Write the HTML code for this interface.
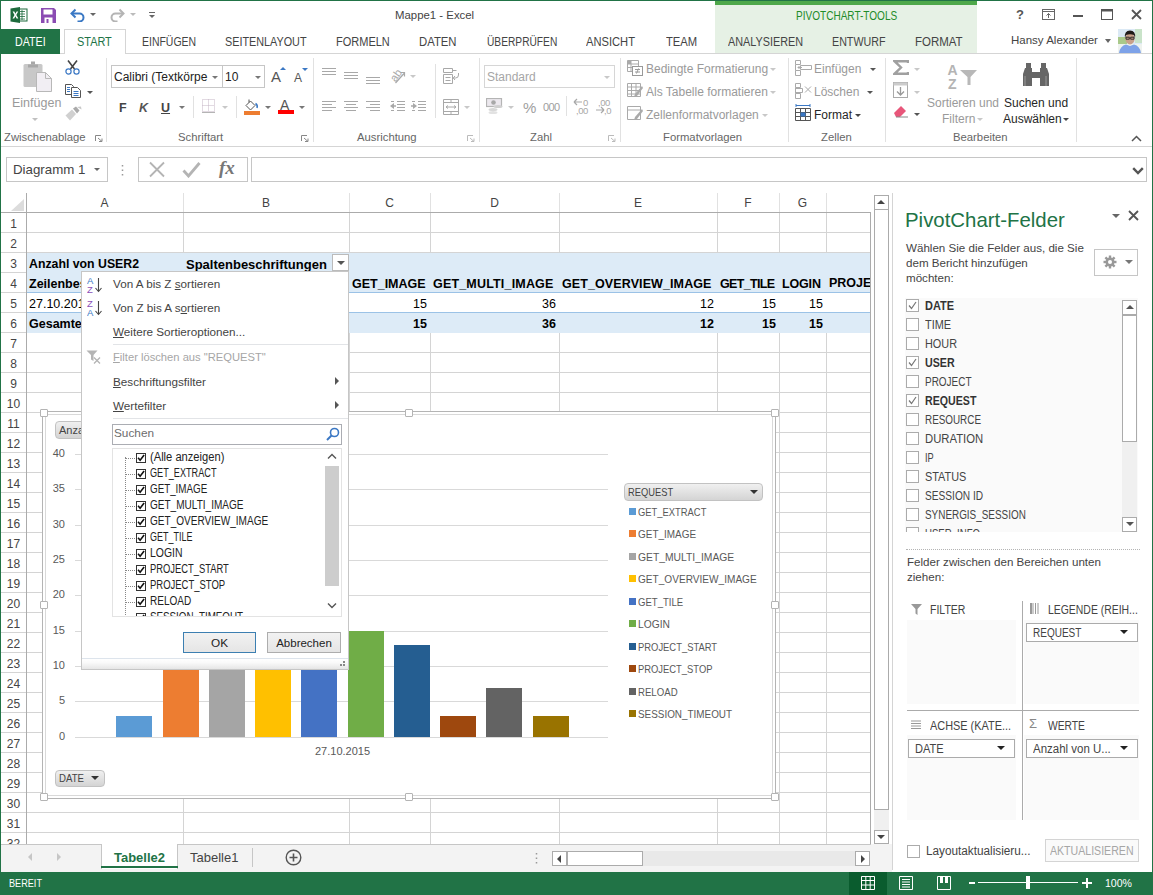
<!DOCTYPE html>
<html><head><meta charset="utf-8">
<style>
*{box-sizing:border-box;margin:0;padding:0}
html,body{width:1153px;height:895px;overflow:hidden;background:#fff}
body{position:relative;font-family:"Liberation Sans",sans-serif;font-size:12px;color:#444}
.a{position:absolute}
.t{position:absolute;white-space:nowrap;line-height:1}
.g{color:#444}
.gl{color:#a6a6a6}
.dk{color:#262626}
.tri{position:absolute;width:0;height:0;border-left:3px solid transparent;border-right:3px solid transparent;border-top:3px solid #777}
.vl{position:absolute;width:1px;background:#d4d4d4}
.hl{position:absolute;height:1px;background:#d4d4d4}
</style></head><body>
<!-- window frame -->
<div class="a" style="left:0;top:0;width:1153px;height:1px;background:#217346"></div>
<div class="a" style="left:0;top:0;width:1px;height:895px;background:#217346"></div>
<div class="a" style="left:1152px;top:0;width:1px;height:895px;background:#217346"></div>

<!-- TITLEBAR -->
<div id="title">
<!-- excel icon -->
<svg class="a" style="left:10px;top:7px" width="18" height="16" viewBox="0 0 18 16">
<rect x="7" y="2" width="10" height="12" fill="#fff" stroke="#1d6b3c" stroke-width="1"/>
<path d="M9 4.5h6M9 7h6M9 9.5h6M9 12h6M12 3v10" stroke="#1d6b3c" stroke-width="0.8"/>
<path d="M0.5 1.5L10 0v16L0.5 14.5z" fill="#1d6b3c"/>
<path d="M2.6 4.5L4.3 4.5L5.4 6.7L6.6 4.5L8.2 4.5L6.3 8L8.3 11.5L6.6 11.5L5.4 9.2L4.2 11.5L2.5 11.5L4.5 8z" fill="#fff"/>
</svg>
<!-- save icon -->
<svg class="a" style="left:41px;top:8px" width="15" height="15" viewBox="0 0 15 15">
<path d="M0 0h13l2 2v13H0z" fill="#8b4cb3"/>
<rect x="2.5" y="1.5" width="9" height="5" fill="#fff"/>
<rect x="3.5" y="9.5" width="8" height="5.5" fill="#fff"/>
<rect x="5.5" y="11" width="2" height="4" fill="#8b4cb3"/>
</svg>
<!-- undo -->
<svg class="a" style="left:69px;top:8px" width="17" height="14" viewBox="0 0 17 14">
<path d="M3 5.5h7.5a4 4 0 0 1 0 8h-2" fill="none" stroke="#3a78c4" stroke-width="2"/>
<path d="M6.5 1.5L2.5 5.5L6.5 9.5" fill="none" stroke="#3a78c4" stroke-width="2"/>
</svg>
<div class="tri" style="left:90px;top:13px;border-top-color:#666"></div>
<!-- redo -->
<svg class="a" style="left:109px;top:8px" width="17" height="14" viewBox="0 0 17 14">
<path d="M14 5.5H6.5a4 4 0 0 0 0 8h2" fill="none" stroke="#b4b4b4" stroke-width="2"/>
<path d="M10.5 1.5L14.5 5.5L10.5 9.5" fill="none" stroke="#b4b4b4" stroke-width="2"/>
</svg>
<div class="tri" style="left:130px;top:13px;border-top-color:#bbb"></div>
<div class="a" style="left:149px;top:12px;width:6px;height:1px;background:#666"></div>
<div class="tri" style="left:149px;top:15px;border-top-color:#666"></div>
<div class="t dk" style="left:395px;top:10px;font-size:11.4px;color:#444">Mappe1 - Excel</div>
<!-- pivotchart tools -->
<div class="a" style="left:715px;top:1px;width:262px;height:52px;background:#e6f1e5"></div>
<div class="a" style="left:715px;top:1px;width:262px;height:4px;background:#4ea84a"></div>
<div class="t" style="left:796px;top:10px;font-size:12px;color:#1f8c2a;transform:scaleX(0.837);transform-origin:0 0">PIVOTCHART-TOOLS</div>
<!-- window buttons -->
<div class="t" style="left:1016px;top:8px;font-size:13px;font-weight:bold;color:#555">?</div>
<svg class="a" style="left:1042px;top:9px" width="13" height="11" viewBox="0 0 13 11"><rect x="0.5" y="0.5" width="12" height="10" fill="none" stroke="#666"/><path d="M0.5 2.5h12" stroke="#666"/><path d="M6.5 9V4.5M4.5 6.5l2-2 2 2" fill="none" stroke="#666"/></svg>
<div class="a" style="left:1073px;top:15px;width:10px;height:2px;background:#555"></div>
<svg class="a" style="left:1101px;top:9px" width="12" height="11" viewBox="0 0 12 11"><rect x="0.5" y="0.5" width="11" height="10" fill="none" stroke="#555"/><path d="M0.5 1.5h11" stroke="#555" stroke-width="2"/></svg>
<svg class="a" style="left:1131px;top:9px" width="11" height="11" viewBox="0 0 11 11"><path d="M1 1L10 10M10 1L1 10" stroke="#555" stroke-width="1.8"/></svg>
<div class="t" style="left:1011px;top:35px;font-size:11.5px;color:#444">Hansy Alexander</div>
<div class="tri" style="left:1105px;top:39px;border-left-width:3px;border-right-width:3px;border-top:4px solid #666"></div>
<!-- avatar -->
<svg class="a" style="left:1118px;top:29px" width="24" height="24" viewBox="0 0 24 24">
<rect width="24" height="24" fill="#dbe9f5"/>
<rect x="0" y="8" width="9" height="8" fill="#a9c98a"/>
<rect x="17" y="0" width="7" height="14" fill="#c9e3c9"/>
<rect x="0" y="15" width="24" height="9" fill="#eef2ee"/>
<path d="M1 24Q2 17 8 15.5L12 17L16 15.5Q22 17 23 24z" fill="#7ea2e8"/>
<ellipse cx="12" cy="9.5" rx="4.6" ry="6" fill="#c9a08a"/>
<path d="M7 9Q6 1.5 12 1.5Q18 1.5 17 9L16 6Q12 4.5 8 6z" fill="#1f1a18"/>
<path d="M8 8.2h3.3v2H8zM12.7 8.2H16v2h-3.3z" fill="none" stroke="#222" stroke-width="0.9"/>
</svg>
</div>

<!-- TABS -->
<div id="tabs">
<div class="a" style="left:1px;top:53px;width:1151px;height:1px;background:#d5d5d5"></div>
<div class="a" style="left:1px;top:29px;width:59px;height:25px;background:#217346"></div>
<div class="t" style="left:14.7px;top:36px;font-size:12px;color:#fff;transform:scaleX(0.891);transform-origin:0 0">DATEI</div>
<div class="a" style="left:64px;top:29px;width:62px;height:25px;background:#fff;border:1px solid #d5d5d5;border-bottom:none"></div>
<div class="t" style="left:76.9px;top:36px;font-size:12px;color:#217346;transform:scaleX(0.910);transform-origin:0 0">START</div>
<div class="t" style="left:141.5px;top:36px;font-size:12px;color:#444;transform:scaleX(0.873);transform-origin:0 0">EINFÜGEN</div>
<div class="t" style="left:225.1px;top:36px;font-size:12px;color:#444;transform:scaleX(0.901);transform-origin:0 0">SEITENLAYOUT</div>
<div class="t" style="left:336.1px;top:36px;font-size:12px;color:#444;transform:scaleX(0.917);transform-origin:0 0">FORMELN</div>
<div class="t" style="left:419.0px;top:36px;font-size:12px;color:#444;transform:scaleX(0.943);transform-origin:0 0">DATEN</div>
<div class="t" style="left:486.5px;top:36px;font-size:12px;color:#444;transform:scaleX(0.850);transform-origin:0 0">ÜBERPRÜFEN</div>
<div class="t" style="left:586.2px;top:36px;font-size:12px;color:#444;transform:scaleX(0.930);transform-origin:0 0">ANSICHT</div>
<div class="t" style="left:665.6px;top:36px;font-size:12px;color:#444;transform:scaleX(0.936);transform-origin:0 0">TEAM</div>
<div class="t" style="left:728.0px;top:36px;font-size:12px;color:#444;transform:scaleX(0.902);transform-origin:0 0">ANALYSIEREN</div>
<div class="t" style="left:832.0px;top:36px;font-size:12px;color:#444;transform:scaleX(0.892);transform-origin:0 0">ENTWURF</div>
<div class="t" style="left:915.0px;top:36px;font-size:12px;color:#444;transform:scaleX(0.956);transform-origin:0 0">FORMAT</div>
</div>

<!-- RIBBON -->
<div id="ribbon">
<div class="a" style="left:1px;top:146px;width:1151px;height:1px;background:#d5d5d5"></div>
<!-- group separators -->
<div class="a" style="left:106px;top:58px;width:1px;height:84px;background:#e1e1e1"></div>
<div class="a" style="left:313px;top:58px;width:1px;height:84px;background:#e1e1e1"></div>
<div class="a" style="left:479px;top:58px;width:1px;height:84px;background:#e1e1e1"></div>
<div class="a" style="left:620px;top:58px;width:1px;height:84px;background:#e1e1e1"></div>
<div class="a" style="left:788px;top:58px;width:1px;height:84px;background:#e1e1e1"></div>
<div class="a" style="left:885px;top:58px;width:1px;height:84px;background:#e1e1e1"></div>
<div class="a" style="left:1076px;top:58px;width:1px;height:84px;background:#e1e1e1"></div>
<!-- group labels -->
<div class="t" style="left:4px;top:132px;font-size:11.3px;color:#666">Zwischenablage</div>
<div class="t" style="left:178px;top:132px;font-size:11.3px;color:#666">Schriftart</div>
<div class="t" style="left:357px;top:132px;font-size:11.3px;color:#666">Ausrichtung</div>
<div class="t" style="left:530px;top:132px;font-size:11.3px;color:#666">Zahl</div>
<div class="t" style="left:663px;top:132px;font-size:11.3px;color:#666">Formatvorlagen</div>
<div class="t" style="left:821px;top:132px;font-size:11.3px;color:#666">Zellen</div>
<div class="t" style="left:953px;top:132px;font-size:11.3px;color:#666">Bearbeiten</div>
<!-- launchers -->
<svg class="a" style="left:95px;top:135px" width="8" height="7" viewBox="0 0 8 7"><path d="M0.5 6V0.5H6M3 3l4 3.5M4 6.5h3v-3" fill="none" stroke="#888"/></svg>
<svg class="a" style="left:301px;top:135px" width="8" height="7" viewBox="0 0 8 7"><path d="M0.5 6V0.5H6M3 3l4 3.5M4 6.5h3v-3" fill="none" stroke="#888"/></svg>
<svg class="a" style="left:467px;top:135px" width="8" height="7" viewBox="0 0 8 7"><path d="M0.5 6V0.5H6M3 3l4 3.5M4 6.5h3v-3" fill="none" stroke="#bbb"/></svg>
<svg class="a" style="left:608px;top:135px" width="8" height="7" viewBox="0 0 8 7"><path d="M0.5 6V0.5H6M3 3l4 3.5M4 6.5h3v-3" fill="none" stroke="#bbb"/></svg>
<svg class="a" style="left:1131px;top:135px" width="11" height="7" viewBox="0 0 11 7"><path d="M1 6L5.5 1.5L10 6" fill="none" stroke="#555" stroke-width="1.5"/></svg>

<!-- Zwischenablage -->
<svg class="a" style="left:23px;top:61px" width="30" height="31" viewBox="0 0 30 31">
<rect x="0.5" y="3" width="19" height="23" rx="1.5" fill="#c8c8c8"/>
<rect x="5" y="3.5" width="10" height="3" fill="#a8a8a8"/>
<rect x="8" y="0.5" width="4" height="3" fill="#a8a8a8"/>
<path d="M13.5 11.5h9l6 6v13h-15z" fill="#f1eef3" stroke="#b8b8b8"/>
<path d="M22.5 11.5v6h6" fill="none" stroke="#b8b8b8"/>
</svg>
<div class="t" style="left:12px;top:97px;font-size:12.5px;color:#9a9a9a">Einfügen</div>
<div class="tri" style="left:32px;top:118px;border-top-color:#c0c0c0"></div>
<svg class="a" style="left:65px;top:60px" width="15" height="15" viewBox="0 0 15 15">
<path d="M3 0.5L9.5 9M12 0.5L5.5 9" stroke="#444" stroke-width="1.6"/>
<circle cx="3.5" cy="11.5" r="2.6" fill="none" stroke="#3b78c4" stroke-width="1.2"/>
<circle cx="11.5" cy="11.5" r="2.6" fill="none" stroke="#3b78c4" stroke-width="1.2"/>
</svg>
<svg class="a" style="left:65px;top:84px" width="16" height="14" viewBox="0 0 16 14">
<path d="M0.5 0.5h6l2 2v8h-8z" fill="#fff" stroke="#555"/>
<path d="M6.5 3.5h6l3 3v7h-9z" fill="#fff" stroke="#555"/>
<path d="M2 3.5h3M2 5.5h3M2 7.5h3M8.5 7.5h5M8.5 9.5h5M8.5 11.5h5" stroke="#3b78c4"/>
</svg>
<div class="tri" style="left:87px;top:91px;border-top-color:#555"></div>
<svg class="a" style="left:65px;top:106px" width="17" height="15" viewBox="0 0 17 15">
<path d="M0.5 9.5L7 3.5L11 8L5 14.5z" fill="#d0d0d0"/>
<path d="M8 2.5L11 0.5L14.5 4.5L12 7.5z" fill="#aaa"/>
<path d="M12 1L16 0.5L16.5 3.5z" fill="#c8c8c8"/>
</svg>

<!-- Schriftart -->
<div class="a" style="left:111px;top:65px;width:112px;height:23px;border:1px solid #c6c6c6;background:#fff"></div>
<div class="a" style="left:222px;top:65px;width:43px;height:23px;border:1px solid #c6c6c6;background:#fff"></div>
<div class="t" style="left:114px;top:71px;font-size:12px;color:#222">Calibri (Textkörpe</div>
<div class="tri" style="left:212px;top:76px;border-top-color:#777"></div>
<div class="t" style="left:225px;top:71px;font-size:12px;color:#222">10</div>
<div class="tri" style="left:255px;top:76px;border-top-color:#777"></div>
<div class="t" style="left:271px;top:69px;font-size:15px;color:#555">A</div>
<div class="a" style="left:280px;top:67px;width:0;height:0;border-left:3px solid transparent;border-right:3px solid transparent;border-bottom:3px solid #3b78c4"></div>
<div class="t" style="left:294px;top:72px;font-size:12px;color:#555">A</div>
<div class="a" style="left:302px;top:68px;width:0;height:0;border-left:3px solid transparent;border-right:3px solid transparent;border-top:3px solid #3b78c4"></div>
<div class="t" style="left:119px;top:102px;font-size:12.5px;font-weight:bold;color:#444">F</div>
<div class="t" style="left:139px;top:102px;font-size:12.5px;font-weight:bold;font-style:italic;color:#555">K</div>
<div class="t" style="left:161px;top:102px;font-size:12.5px;font-weight:bold;color:#444;text-decoration:underline">U</div>
<div class="tri" style="left:179px;top:106px;border-top-color:#777"></div>
<div class="a" style="left:193px;top:96px;width:1px;height:22px;background:#e1e1e1"></div>
<svg class="a" style="left:202px;top:99px" width="13" height="14" viewBox="0 0 13 14"><path d="M0.5 0.5h12v12h-12zM6.5 0.5v12M0.5 6.5h12" fill="none" stroke="#c4b4c4" stroke-dasharray="1 1"/><path d="M0 13.5h13" stroke="#b4b4b4"/></svg>
<div class="tri" style="left:222px;top:106px;border-top-color:#c8c8c8"></div>
<div class="a" style="left:236px;top:96px;width:1px;height:22px;background:#e1e1e1"></div>
<svg class="a" style="left:244px;top:99px" width="16" height="16" viewBox="0 0 16 16">
<path d="M2 6.5L6.5 2L11 6.5L6.5 11z" fill="#fff" stroke="#555"/>
<path d="M5 0.5v3" stroke="#555"/>
<path d="M11.5 4.5Q14 6 13 9" fill="none" stroke="#3b78c4" stroke-width="1.5"/>
<rect x="0" y="12" width="16" height="4" fill="#ed7d31"/>
</svg>
<div class="tri" style="left:265px;top:106px;border-top-color:#777"></div>
<div class="t" style="left:280px;top:98px;font-size:14px;color:#555">A</div>
<div class="a" style="left:278px;top:110px;width:16px;height:4px;background:#ff0000"></div>
<div class="tri" style="left:299px;top:106px;border-top-color:#777"></div>

<!-- Ausrichtung -->
<svg class="a" style="left:322px;top:67px" width="60" height="17" viewBox="0 0 60 17">
<path d="M0 1.5h14M0 4.5h14M0 7.5h14" stroke="#a8a8a8"/>
<path d="M22 5.5h14M22 8.5h14M22 11.5h14" stroke="#a8a8a8"/>
<path d="M44 10.5h14M44 13.5h14M44 16.5h14" stroke="#a8a8a8"/>
</svg>
<svg class="a" style="left:389px;top:67px" width="18" height="17" viewBox="0 0 18 17">
<text x="1" y="13" font-size="11" font-family="Liberation Sans" fill="#a8a8a8" transform="rotate(-55 6 9)">ab</text>
<path d="M6.5 16L15 6.5M11.5 5.5h4v4" fill="none" stroke="#a8a8a8" stroke-width="1.2"/>
</svg>
<div class="tri" style="left:410px;top:75px;border-top-color:#c8c8c8"></div>
<svg class="a" style="left:322px;top:101px" width="107" height="12" viewBox="0 0 107 12">
<path d="M0 0.5h14M0 3.5h10M0 6.5h14M0 9.5h10" stroke="#a8a8a8"/>
<path d="M22 0.5h14M24 3.5h10M22 6.5h14M24 9.5h10" stroke="#a8a8a8"/>
<path d="M44 0.5h14M48 3.5h10M44 6.5h14M48 9.5h10" stroke="#a8a8a8"/>
<path d="M69 0.5h3M75 0.5h8M75 3.5h8M75 6.5h8M69 9.5h3M75 9.5h8" stroke="#a8a8a8"/>
<path d="M68 5L72 2V8z" fill="#a8a8a8"/><path d="M70 5h4" stroke="#a8a8a8" stroke-width="1.5"/>
<path d="M90 0.5h3M96 0.5h8M96 3.5h8M96 6.5h8M90 9.5h3M96 9.5h8" stroke="#a8a8a8"/>
<path d="M95 5L91 2V8z" fill="#a8a8a8"/><path d="M89 5h4" stroke="#a8a8a8" stroke-width="1.5"/>
</svg>
<div class="a" style="left:435px;top:64px;width:1px;height:54px;background:#e1e1e1"></div>
<svg class="a" style="left:443px;top:68px" width="17" height="16" viewBox="0 0 17 16">
<path d="M0.5 0.5h9v4h-9zM9.5 2.5h4M0.5 6.5h9v9h-9zM2.5 9.5h5M2.5 12.5h5" fill="none" stroke="#a8a8a8"/>
<path d="M15.5 5v2a3 3 0 0 1-3 3h-2M12 8l-1.8 2 1.8 2" fill="none" stroke="#a8a8a8"/>
</svg>
<svg class="a" style="left:443px;top:99px" width="16" height="16" viewBox="0 0 16 16">
<path d="M0.5 0.5h15v15h-15zM0.5 3.5h15M0.5 12.5h15M8 0.5v3M8 12.5v3" fill="none" stroke="#a8a8a8"/>
<path d="M3 8h10M3 8l2-1.5M3 8l2 1.5M13 8l-2-1.5M13 8l-2 1.5" fill="none" stroke="#a8a8a8"/>
</svg>
<div class="tri" style="left:464px;top:106px;border-top-color:#c8c8c8"></div>

<!-- Zahl -->
<div class="a" style="left:484px;top:65px;width:131px;height:23px;border:1px solid #d6d6d6;background:#fff"></div>
<div class="t" style="left:487px;top:71px;font-size:12px;color:#a6a6a6">Standard</div>
<div class="tri" style="left:604px;top:76px;border-top-color:#c8c8c8"></div>
<svg class="a" style="left:486px;top:98px" width="18" height="17" viewBox="0 0 18 17">
<rect x="0.5" y="0.5" width="15" height="8" fill="#ece8ee" stroke="#b4b4b4" stroke-width="1.2"/>
<circle cx="7.5" cy="4.5" r="2.3" fill="#a8a8a8"/>
<ellipse cx="12" cy="8.5" rx="4.5" ry="1.6" fill="#d0d0d0"/>
<ellipse cx="7" cy="11.5" rx="4.5" ry="1.6" fill="#d8d8d8"/>
<ellipse cx="7" cy="14.5" rx="4.5" ry="1.6" fill="#e2e2e2"/>
</svg>
<div class="tri" style="left:508px;top:106px;border-top-color:#c8c8c8"></div>
<div class="t" style="left:523px;top:100px;font-size:15px;color:#a0a0a0">%</div>
<div class="t" style="left:543px;top:102px;font-size:11px;letter-spacing:-0.6px;color:#a0a0a0">000</div>
<div class="a" style="left:566px;top:96px;width:1px;height:20px;background:#e1e1e1"></div>
<div class="t" style="left:583px;top:98px;font-size:9.5px;letter-spacing:-0.4px;color:#a8a8a8">0</div>
<div class="t" style="left:576px;top:106px;font-size:9.5px;letter-spacing:-0.4px;color:#a8a8a8">,00</div>
<div class="t" style="left:598px;top:98px;font-size:9.5px;letter-spacing:-0.4px;color:#a8a8a8">,00</div>
<div class="t" style="left:604px;top:106px;font-size:9.5px;letter-spacing:-0.4px;color:#a8a8a8">,0</div>
<svg class="a" style="left:573px;top:98px" width="40" height="17" viewBox="0 0 40 17"><path d="M1 4h8M1 4l3-3M1 4l3 3M23 12h8M31 12l-3-3M31 12l-3 3" fill="none" stroke="#a8a8a8" stroke-width="1.2"/></svg>

<!-- Formatvorlagen -->
<svg class="a" style="left:627px;top:60px" width="16" height="16" viewBox="0 0 16 16">
<path d="M0.5 0.5h11v11h-11zM0.5 4h11M0.5 7.5h11M4 0.5v11" fill="none" stroke="#aaa"/>
<rect x="0.5" y="0.5" width="3.5" height="3.5" fill="#aaa"/>
<rect x="5.5" y="6.5" width="10" height="9" fill="#fff" stroke="#999"/>
<path d="M8 9.5h5M8 12h5M11.5 8.5L9.5 13.5" stroke="#999"/>
</svg>
<div class="t" style="left:646px;top:63px;font-size:12px;color:#9a9a9a">Bedingte Formatierung</div>
<div class="tri" style="left:770px;top:68px;border-top-color:#c8c8c8"></div>
<svg class="a" style="left:627px;top:83px" width="16" height="16" viewBox="0 0 16 16">
<path d="M0.5 0.5h13v13h-13zM0.5 4h13M0.5 7.5h13M0.5 11h13M4.5 0.5v13M9 0.5v13" fill="none" stroke="#aaa"/>
<path d="M15 3L8 11L7 14L10 13L16 5z" fill="#aaa"/>
</svg>
<div class="t" style="left:646px;top:86px;font-size:12px;color:#9a9a9a">Als Tabelle formatieren</div>
<div class="tri" style="left:770px;top:91px;border-top-color:#c8c8c8"></div>
<svg class="a" style="left:627px;top:106px" width="16" height="16" viewBox="0 0 16 16">
<path d="M0.5 0.5h13v13h-13zM0.5 4h13" fill="none" stroke="#aaa"/>
<path d="M15 3L8 11L7 14L10 13L16 5z" fill="#aaa"/>
</svg>
<div class="t" style="left:646px;top:109px;font-size:12px;color:#9a9a9a">Zellenformatvorlagen</div>
<div class="tri" style="left:762px;top:114px;border-top-color:#c8c8c8"></div>

<!-- Zellen -->
<svg class="a" style="left:795px;top:60px" width="17" height="16" viewBox="0 0 17 16">
<path d="M0.5 0.5h5v4h-5zM0.5 10.5h5v5h-5zM5.5 5.5h11v4h-11zM0.5 4.5v6" fill="none" stroke="#aaa"/>
<path d="M3 7.5H7M3 7.5l1.5-1.5M3 7.5l1.5 1.5" fill="none" stroke="#aaa"/>
</svg>
<div class="t" style="left:814px;top:63px;font-size:12px;color:#9a9a9a">Einfügen</div>
<div class="tri" style="left:870px;top:68px;border-top-color:#555"></div>
<svg class="a" style="left:795px;top:83px" width="17" height="16" viewBox="0 0 17 16">
<path d="M0.5 0.5h5v4h-5zM0.5 10.5h5v5h-5zM0.5 5.5h7v4h-7zM0.5 4.5v6" fill="none" stroke="#aaa"/>
<path d="M10 3.5l6 6M16 3.5l-6 6" stroke="#aaa"/>
</svg>
<div class="t" style="left:814px;top:86px;font-size:12px;color:#9a9a9a">Löschen</div>
<div class="tri" style="left:867px;top:91px;border-top-color:#555"></div>
<svg class="a" style="left:795px;top:104px" width="17" height="18" viewBox="0 0 17 18">
<path d="M1 1.5h14M1 0v3M15 0v3" stroke="#3b78c4"/>
<path d="M0.5 4.5h15v12h-15zM0.5 8.5h15M0.5 12.5h15M5.5 4.5v12M10.5 4.5v12" fill="none" stroke="#555"/>
<rect x="5.5" y="8.5" width="5" height="4" fill="#3b78c4"/>
</svg>
<div class="t" style="left:814px;top:109px;font-size:12px;color:#262626">Format</div>
<div class="tri" style="left:855px;top:114px;border-top-color:#444"></div>

<!-- Bearbeiten -->
<svg class="a" style="left:893px;top:60px" width="16" height="15" viewBox="0 0 16 15"><path d="M15 3V1.2H1.5L8 7.5L1.5 13.8H15V12" fill="none" stroke="#a0a0a0" stroke-width="2.4"/></svg>
<div class="tri" style="left:914px;top:68px;border-top-color:#c8c8c8"></div>
<svg class="a" style="left:893px;top:82px" width="15" height="16" viewBox="0 0 15 16"><rect x="0.5" y="0.5" width="14" height="15" fill="#fff" stroke="#aaa"/><rect x="0.5" y="0.5" width="14" height="3" fill="#ccc"/><path d="M7.5 5v8M4 9.5l3.5 3.5 3.5-3.5" fill="none" stroke="#999" stroke-width="1.3"/></svg>
<div class="tri" style="left:914px;top:91px;border-top-color:#c8c8c8"></div>
<svg class="a" style="left:893px;top:104px" width="16" height="16" viewBox="0 0 16 16"><path d="M1 9L8 2L13 7L7 13H3z" fill="#e8567a"/><path d="M3 13h12" stroke="#888"/></svg>
<div class="tri" style="left:914px;top:113px;border-top-color:#555"></div>
<svg class="a" style="left:947px;top:62px" width="32" height="28" viewBox="0 0 32 28">
<text x="0.5" y="12.5" font-size="14" font-weight="bold" font-family="Liberation Sans" fill="#b4b4b4">A</text>
<text x="1" y="26.5" font-size="14" font-weight="bold" font-family="Liberation Sans" fill="#b4b4b4">Z</text>
<path d="M13 8h17L23.5 15v8h-3v-8z" fill="#b8b8b8"/>
</svg>
<div class="t" style="left:927px;top:97px;font-size:12px;color:#9a9a9a">Sortieren und</div>
<div class="t" style="left:942px;top:113px;font-size:12px;color:#9a9a9a">Filtern</div>
<div class="tri" style="left:977px;top:118px;border-top-color:#c8c8c8"></div>
<svg class="a" style="left:1022px;top:62px" width="28" height="26" viewBox="0 0 28 26">
<path d="M3 6h7v18H1V12z" fill="#666"/><path d="M25 6h-7v18h9V12z" fill="#666"/>
<rect x="9" y="10" width="10" height="6" fill="#666"/>
<rect x="4" y="1" width="5" height="6" fill="#666"/><rect x="19" y="1" width="5" height="6" fill="#666"/>
<path d="M3 24V14M24 24V14" stroke="#999" stroke-width="1"/>
</svg>
<div class="t" style="left:1004px;top:97px;font-size:12px;color:#262626">Suchen und</div>
<div class="t" style="left:1003px;top:113px;font-size:12px;color:#262626">Auswählen</div>
<div class="tri" style="left:1063px;top:118px;border-top-color:#444"></div>
</div>

<!-- FORMULA BAR -->
<div id="fbar">
<div class="a" style="left:6px;top:157px;width:102px;height:25px;border:1px solid #c6c6c6"></div>
<div class="t" style="left:13px;top:163px;font-size:13.3px;color:#444">Diagramm 1</div>
<div class="tri" style="left:94px;top:168px;border-top-color:#666"></div>
<svg class="a" style="left:121px;top:164px" width="3" height="13" viewBox="0 0 3 13"><path d="M1.5 1v1.5M1.5 5.5v1.5M1.5 10v1.5" stroke="#999" stroke-width="1.5"/></svg>
<div class="a" style="left:138px;top:157px;width:110px;height:25px;border:1px solid #c6c6c6"></div>
<svg class="a" style="left:148px;top:161px" width="18" height="17" viewBox="0 0 18 17"><path d="M2 1.5L16 15.5M16 1.5L2 15.5" stroke="#b4b4b4" stroke-width="1.8"/></svg>
<svg class="a" style="left:182px;top:161px" width="19" height="17" viewBox="0 0 19 17"><path d="M1.5 9.5L6.5 15L17.5 2" fill="none" stroke="#b4b4b4" stroke-width="2.8"/></svg>
<div class="t" style="left:219px;top:158px;font-size:19px;font-family:'Liberation Serif',serif;font-style:italic;font-weight:bold;color:#777">fx</div>
<div class="a" style="left:251px;top:157px;width:896px;height:25px;border:1px solid #c6c6c6"></div>
<svg class="a" style="left:1132px;top:167px" width="12" height="8" viewBox="0 0 12 8"><path d="M1.2 1.2l4.8 4.8 4.8-4.8" fill="none" stroke="#555" stroke-width="2.4"/></svg>
</div>

<!-- GRID -->
<div id="grid">
<svg class="a" style="left:11px;top:199px" width="14" height="13" viewBox="0 0 14 13"><path d="M13 0V12H0z" fill="#dcdcdc"/></svg>
<div class="t" style="left:94.5px;width:20px;text-align:center;top:197px;font-size:12px;color:#444">A</div>
<div class="t" style="left:256.0px;width:20px;text-align:center;top:197px;font-size:12px;color:#444">B</div>
<div class="t" style="left:379.5px;width:20px;text-align:center;top:197px;font-size:12px;color:#444">C</div>
<div class="t" style="left:484.5px;width:20px;text-align:center;top:197px;font-size:12px;color:#444">D</div>
<div class="t" style="left:628.0px;width:20px;text-align:center;top:197px;font-size:12px;color:#444">E</div>
<div class="t" style="left:738.0px;width:20px;text-align:center;top:197px;font-size:12px;color:#444">F</div>
<div class="t" style="left:792.5px;width:20px;text-align:center;top:197px;font-size:12px;color:#444">G</div>
<div class="vl" style="left:183px;top:193px;height:19px;background:#e1e1e1"></div>
<div class="vl" style="left:349px;top:193px;height:19px;background:#e1e1e1"></div>
<div class="vl" style="left:430px;top:193px;height:19px;background:#e1e1e1"></div>
<div class="vl" style="left:559px;top:193px;height:19px;background:#e1e1e1"></div>
<div class="vl" style="left:717px;top:193px;height:19px;background:#e1e1e1"></div>
<div class="vl" style="left:779px;top:193px;height:19px;background:#e1e1e1"></div>
<div class="vl" style="left:826px;top:193px;height:19px;background:#e1e1e1"></div>
<div class="a" style="left:1px;top:212px;width:869px;height:1px;background:#ababab"></div>
<div class="a" style="left:26px;top:193px;width:1px;height:651px;background:#ababab"></div>
<div class="a" style="left:27px;top:252px;width:843px;height:40px;background:#ddebf7"></div>
<div class="a" style="left:27px;top:313px;width:843px;height:20px;background:#ddebf7"></div>
<div class="hl" style="left:27px;top:232px;width:843px;background:#d4d4d4"></div>
<div class="hl" style="left:1px;top:232px;width:25px;background:#d4d4d4"></div>
<div class="hl" style="left:27px;top:252px;width:843px;background:#d4d4d4"></div>
<div class="hl" style="left:1px;top:252px;width:25px;background:#d4d4d4"></div>
<div class="hl" style="left:27px;top:292px;width:843px;background:#9bc2e6"></div>
<div class="hl" style="left:1px;top:292px;width:25px;background:#d4d4d4"></div>
<div class="hl" style="left:27px;top:312px;width:843px;background:#9bc2e6"></div>
<div class="hl" style="left:1px;top:312px;width:25px;background:#d4d4d4"></div>
<div class="hl" style="left:27px;top:352px;width:843px;background:#d4d4d4"></div>
<div class="hl" style="left:1px;top:352px;width:25px;background:#d4d4d4"></div>
<div class="hl" style="left:27px;top:372px;width:843px;background:#d4d4d4"></div>
<div class="hl" style="left:1px;top:372px;width:25px;background:#d4d4d4"></div>
<div class="hl" style="left:27px;top:392px;width:843px;background:#d4d4d4"></div>
<div class="hl" style="left:1px;top:392px;width:25px;background:#d4d4d4"></div>
<div class="hl" style="left:27px;top:412px;width:843px;background:#d4d4d4"></div>
<div class="hl" style="left:1px;top:412px;width:25px;background:#d4d4d4"></div>
<div class="hl" style="left:27px;top:432px;width:843px;background:#d4d4d4"></div>
<div class="hl" style="left:1px;top:432px;width:25px;background:#d4d4d4"></div>
<div class="hl" style="left:27px;top:452px;width:843px;background:#d4d4d4"></div>
<div class="hl" style="left:1px;top:452px;width:25px;background:#d4d4d4"></div>
<div class="hl" style="left:27px;top:472px;width:843px;background:#d4d4d4"></div>
<div class="hl" style="left:1px;top:472px;width:25px;background:#d4d4d4"></div>
<div class="hl" style="left:27px;top:492px;width:843px;background:#d4d4d4"></div>
<div class="hl" style="left:1px;top:492px;width:25px;background:#d4d4d4"></div>
<div class="hl" style="left:27px;top:512px;width:843px;background:#d4d4d4"></div>
<div class="hl" style="left:1px;top:512px;width:25px;background:#d4d4d4"></div>
<div class="hl" style="left:27px;top:532px;width:843px;background:#d4d4d4"></div>
<div class="hl" style="left:1px;top:532px;width:25px;background:#d4d4d4"></div>
<div class="hl" style="left:27px;top:552px;width:843px;background:#d4d4d4"></div>
<div class="hl" style="left:1px;top:552px;width:25px;background:#d4d4d4"></div>
<div class="hl" style="left:27px;top:572px;width:843px;background:#d4d4d4"></div>
<div class="hl" style="left:1px;top:572px;width:25px;background:#d4d4d4"></div>
<div class="hl" style="left:27px;top:592px;width:843px;background:#d4d4d4"></div>
<div class="hl" style="left:1px;top:592px;width:25px;background:#d4d4d4"></div>
<div class="hl" style="left:27px;top:612px;width:843px;background:#d4d4d4"></div>
<div class="hl" style="left:1px;top:612px;width:25px;background:#d4d4d4"></div>
<div class="hl" style="left:27px;top:632px;width:843px;background:#d4d4d4"></div>
<div class="hl" style="left:1px;top:632px;width:25px;background:#d4d4d4"></div>
<div class="hl" style="left:27px;top:652px;width:843px;background:#d4d4d4"></div>
<div class="hl" style="left:1px;top:652px;width:25px;background:#d4d4d4"></div>
<div class="hl" style="left:27px;top:672px;width:843px;background:#d4d4d4"></div>
<div class="hl" style="left:1px;top:672px;width:25px;background:#d4d4d4"></div>
<div class="hl" style="left:27px;top:692px;width:843px;background:#d4d4d4"></div>
<div class="hl" style="left:1px;top:692px;width:25px;background:#d4d4d4"></div>
<div class="hl" style="left:27px;top:712px;width:843px;background:#d4d4d4"></div>
<div class="hl" style="left:1px;top:712px;width:25px;background:#d4d4d4"></div>
<div class="hl" style="left:27px;top:732px;width:843px;background:#d4d4d4"></div>
<div class="hl" style="left:1px;top:732px;width:25px;background:#d4d4d4"></div>
<div class="hl" style="left:27px;top:752px;width:843px;background:#d4d4d4"></div>
<div class="hl" style="left:1px;top:752px;width:25px;background:#d4d4d4"></div>
<div class="hl" style="left:27px;top:772px;width:843px;background:#d4d4d4"></div>
<div class="hl" style="left:1px;top:772px;width:25px;background:#d4d4d4"></div>
<div class="hl" style="left:27px;top:792px;width:843px;background:#d4d4d4"></div>
<div class="hl" style="left:1px;top:792px;width:25px;background:#d4d4d4"></div>
<div class="hl" style="left:27px;top:812px;width:843px;background:#d4d4d4"></div>
<div class="hl" style="left:1px;top:812px;width:25px;background:#d4d4d4"></div>
<div class="hl" style="left:27px;top:832px;width:843px;background:#d4d4d4"></div>
<div class="hl" style="left:1px;top:832px;width:25px;background:#d4d4d4"></div>
<div class="vl" style="left:183px;top:213px;height:39px"></div>
<div class="vl" style="left:183px;top:333px;height:511px"></div>
<div class="vl" style="left:349px;top:213px;height:39px"></div>
<div class="vl" style="left:349px;top:333px;height:511px"></div>
<div class="vl" style="left:430px;top:213px;height:39px"></div>
<div class="vl" style="left:430px;top:333px;height:511px"></div>
<div class="vl" style="left:559px;top:213px;height:39px"></div>
<div class="vl" style="left:559px;top:333px;height:511px"></div>
<div class="vl" style="left:717px;top:213px;height:39px"></div>
<div class="vl" style="left:717px;top:333px;height:511px"></div>
<div class="vl" style="left:779px;top:213px;height:39px"></div>
<div class="vl" style="left:779px;top:333px;height:511px"></div>
<div class="vl" style="left:826px;top:213px;height:39px"></div>
<div class="vl" style="left:826px;top:333px;height:511px"></div>
<div class="a" style="left:870px;top:212px;width:1px;height:633px;background:#ababab"></div><div class="hl" style="left:1px;top:272px;width:25px"></div><div class="hl" style="left:1px;top:332px;width:25px"></div><div class="a" style="left:27px;top:844px;width:844px;height:1px;background:#ababab"></div>
<div class="t" style="left:1px;width:25px;text-align:center;top:217.5px;font-size:12px;color:#444">1</div>
<div class="t" style="left:1px;width:25px;text-align:center;top:237.5px;font-size:12px;color:#444">2</div>
<div class="t" style="left:1px;width:25px;text-align:center;top:257.5px;font-size:12px;color:#444">3</div>
<div class="t" style="left:1px;width:25px;text-align:center;top:277.5px;font-size:12px;color:#444">4</div>
<div class="t" style="left:1px;width:25px;text-align:center;top:297.5px;font-size:12px;color:#444">5</div>
<div class="t" style="left:1px;width:25px;text-align:center;top:317.5px;font-size:12px;color:#444">6</div>
<div class="t" style="left:1px;width:25px;text-align:center;top:337.5px;font-size:12px;color:#444">7</div>
<div class="t" style="left:1px;width:25px;text-align:center;top:357.5px;font-size:12px;color:#444">8</div>
<div class="t" style="left:1px;width:25px;text-align:center;top:377.5px;font-size:12px;color:#444">9</div>
<div class="t" style="left:1px;width:25px;text-align:center;top:397.5px;font-size:12px;color:#444">10</div>
<div class="t" style="left:1px;width:25px;text-align:center;top:417.5px;font-size:12px;color:#444">11</div>
<div class="t" style="left:1px;width:25px;text-align:center;top:437.5px;font-size:12px;color:#444">12</div>
<div class="t" style="left:1px;width:25px;text-align:center;top:457.5px;font-size:12px;color:#444">13</div>
<div class="t" style="left:1px;width:25px;text-align:center;top:477.5px;font-size:12px;color:#444">14</div>
<div class="t" style="left:1px;width:25px;text-align:center;top:497.5px;font-size:12px;color:#444">15</div>
<div class="t" style="left:1px;width:25px;text-align:center;top:517.5px;font-size:12px;color:#444">16</div>
<div class="t" style="left:1px;width:25px;text-align:center;top:537.5px;font-size:12px;color:#444">17</div>
<div class="t" style="left:1px;width:25px;text-align:center;top:557.5px;font-size:12px;color:#444">18</div>
<div class="t" style="left:1px;width:25px;text-align:center;top:577.5px;font-size:12px;color:#444">19</div>
<div class="t" style="left:1px;width:25px;text-align:center;top:597.5px;font-size:12px;color:#444">20</div>
<div class="t" style="left:1px;width:25px;text-align:center;top:617.5px;font-size:12px;color:#444">21</div>
<div class="t" style="left:1px;width:25px;text-align:center;top:637.5px;font-size:12px;color:#444">22</div>
<div class="t" style="left:1px;width:25px;text-align:center;top:657.5px;font-size:12px;color:#444">23</div>
<div class="t" style="left:1px;width:25px;text-align:center;top:677.5px;font-size:12px;color:#444">24</div>
<div class="t" style="left:1px;width:25px;text-align:center;top:697.5px;font-size:12px;color:#444">25</div>
<div class="t" style="left:1px;width:25px;text-align:center;top:717.5px;font-size:12px;color:#444">26</div>
<div class="t" style="left:1px;width:25px;text-align:center;top:737.5px;font-size:12px;color:#444">27</div>
<div class="t" style="left:1px;width:25px;text-align:center;top:757.5px;font-size:12px;color:#444">28</div>
<div class="t" style="left:1px;width:25px;text-align:center;top:777.5px;font-size:12px;color:#444">29</div>
<div class="t" style="left:1px;width:25px;text-align:center;top:797.5px;font-size:12px;color:#444">30</div>
<div class="t" style="left:1px;width:25px;text-align:center;top:817.5px;font-size:12px;color:#444">31</div>
<div class="t" style="left:1px;width:25px;text-align:center;top:837.5px;font-size:12px;color:#444">32</div>
<div class="t" style="left:29px;top:258px;font-size:12.3px;font-weight:bold;color:#000">Anzahl von USER2</div>
<div class="t" style="left:186px;top:258px;font-size:13px;font-weight:bold;color:#000">Spaltenbeschriftungen</div>
<div class="a" style="left:332px;top:254px;width:17px;height:17px;border:1px solid #bbb;background:#fff"></div>
<div class="tri" style="left:337px;top:261px;border-left-width:4px;border-right-width:4px;border-top:4px solid #555"></div>
<div class="t" style="left:29px;top:278px;font-size:12.5px;font-weight:bold;color:#000">Zeilenbeschriftungen</div>
<div class="t" style="left:29px;top:298px;font-size:12.5px;color:#000">27.10.2015</div>
<div class="t" style="left:29px;top:318px;font-size:12.5px;font-weight:bold;color:#000">Gesamtergebnis</div>
<div class="t" style="left:352px;top:278px;font-size:12.5px;letter-spacing:0px;font-weight:bold;color:#000">GET_IMAGE</div>
<div class="t" style="left:433px;top:278px;font-size:12.5px;letter-spacing:0.18px;font-weight:bold;color:#000">GET_MULTI_IMAGE</div>
<div class="t" style="left:562px;top:278px;font-size:12.5px;letter-spacing:0.1px;font-weight:bold;color:#000">GET_OVERVIEW_IMAGE</div>
<div class="t" style="left:720px;top:278px;font-size:12.5px;letter-spacing:-0.66px;font-weight:bold;color:#000">GET_TILE</div>
<div class="t" style="left:782px;top:278px;font-size:12.5px;letter-spacing:-0.16px;font-weight:bold;color:#000">LOGIN</div>
<div class="a" style="left:827px;top:272px;width:43px;height:20px;overflow:hidden"><div class="t" style="left:2px;top:5px;font-size:12.5px;font-weight:bold;color:#000">PROJECT_START</div></div>
<div class="t" style="left:370px;width:57px;text-align:right;top:298px;font-size:12.5px;color:#000">15</div>
<div class="t" style="left:370px;width:57px;text-align:right;top:318px;font-size:12.5px;font-weight:bold;color:#000">15</div>
<div class="t" style="left:499px;width:57px;text-align:right;top:298px;font-size:12.5px;color:#000">36</div>
<div class="t" style="left:499px;width:57px;text-align:right;top:318px;font-size:12.5px;font-weight:bold;color:#000">36</div>
<div class="t" style="left:657px;width:57px;text-align:right;top:298px;font-size:12.5px;color:#000">12</div>
<div class="t" style="left:657px;width:57px;text-align:right;top:318px;font-size:12.5px;font-weight:bold;color:#000">12</div>
<div class="t" style="left:719px;width:57px;text-align:right;top:298px;font-size:12.5px;color:#000">15</div>
<div class="t" style="left:719px;width:57px;text-align:right;top:318px;font-size:12.5px;font-weight:bold;color:#000">15</div>
<div class="t" style="left:766px;width:57px;text-align:right;top:298px;font-size:12.5px;color:#000">15</div>
<div class="t" style="left:766px;width:57px;text-align:right;top:318px;font-size:12.5px;font-weight:bold;color:#000">15</div>
</div>

<!-- CHART -->
<div id="chart">
<div class="a" style="left:42px;top:411px;width:734px;height:388px;border:1px solid #b4b4b4;background:#fff"></div>
<div class="a" style="left:45px;top:414px;width:728px;height:382px;border:1px solid #d9d9d9;background:#fff"></div>
<div class="a" style="left:40px;top:409px;width:8px;height:8px;border:1px solid #b4b4b4;background:#fff;border-radius:1px"></div>
<div class="a" style="left:40px;top:601px;width:8px;height:8px;border:1px solid #b4b4b4;background:#fff;border-radius:1px"></div>
<div class="a" style="left:40px;top:793px;width:8px;height:8px;border:1px solid #b4b4b4;background:#fff;border-radius:1px"></div>
<div class="a" style="left:405px;top:409px;width:8px;height:8px;border:1px solid #b4b4b4;background:#fff;border-radius:1px"></div>
<div class="a" style="left:405px;top:793px;width:8px;height:8px;border:1px solid #b4b4b4;background:#fff;border-radius:1px"></div>
<div class="a" style="left:771px;top:409px;width:8px;height:8px;border:1px solid #b4b4b4;background:#fff;border-radius:1px"></div>
<div class="a" style="left:771px;top:601px;width:8px;height:8px;border:1px solid #b4b4b4;background:#fff;border-radius:1px"></div>
<div class="a" style="left:771px;top:793px;width:8px;height:8px;border:1px solid #b4b4b4;background:#fff;border-radius:1px"></div>
<div class="a" style="left:75px;top:737px;width:533px;height:1px;background:#d9d9d9"></div>
<div class="t" style="left:35px;width:30px;text-align:right;top:731px;font-size:11px;color:#595959">0</div>
<div class="a" style="left:75px;top:701px;width:533px;height:1px;background:#d9d9d9"></div>
<div class="t" style="left:35px;width:30px;text-align:right;top:695px;font-size:11px;color:#595959">5</div>
<div class="a" style="left:75px;top:666px;width:533px;height:1px;background:#d9d9d9"></div>
<div class="t" style="left:35px;width:30px;text-align:right;top:660px;font-size:11px;color:#595959">10</div>
<div class="a" style="left:75px;top:631px;width:533px;height:1px;background:#d9d9d9"></div>
<div class="t" style="left:35px;width:30px;text-align:right;top:625px;font-size:11px;color:#595959">15</div>
<div class="a" style="left:75px;top:595px;width:533px;height:1px;background:#d9d9d9"></div>
<div class="t" style="left:35px;width:30px;text-align:right;top:589px;font-size:11px;color:#595959">20</div>
<div class="a" style="left:75px;top:560px;width:533px;height:1px;background:#d9d9d9"></div>
<div class="t" style="left:35px;width:30px;text-align:right;top:554px;font-size:11px;color:#595959">25</div>
<div class="a" style="left:75px;top:525px;width:533px;height:1px;background:#d9d9d9"></div>
<div class="t" style="left:35px;width:30px;text-align:right;top:519px;font-size:11px;color:#595959">30</div>
<div class="a" style="left:75px;top:489px;width:533px;height:1px;background:#d9d9d9"></div>
<div class="t" style="left:35px;width:30px;text-align:right;top:483px;font-size:11px;color:#595959">35</div>
<div class="a" style="left:75px;top:454px;width:533px;height:1px;background:#d9d9d9"></div>
<div class="t" style="left:35px;width:30px;text-align:right;top:448px;font-size:11px;color:#595959">40</div>
<div class="a" style="left:116.3px;top:715.8px;width:36px;height:21.2px;background:#5b9bd5"></div>
<div class="a" style="left:162.6px;top:630.9px;width:36px;height:106.1px;background:#ed7d31"></div>
<div class="a" style="left:208.8px;top:482.3px;width:36px;height:254.7px;background:#a5a5a5"></div>
<div class="a" style="left:255.1px;top:652.1px;width:36px;height:84.9px;background:#ffc000"></div>
<div class="a" style="left:301.3px;top:630.9px;width:36px;height:106.1px;background:#4472c4"></div>
<div class="a" style="left:347.6px;top:630.9px;width:36px;height:106.1px;background:#70ad47"></div>
<div class="a" style="left:393.8px;top:645.0px;width:36px;height:92.0px;background:#255e91"></div>
<div class="a" style="left:440.1px;top:715.8px;width:36px;height:21.2px;background:#9e480e"></div>
<div class="a" style="left:486.3px;top:687.5px;width:36px;height:49.5px;background:#636363"></div>
<div class="a" style="left:532.5px;top:715.8px;width:36px;height:21.2px;background:#997300"></div>
<div class="t" style="left:315px;top:746px;font-size:11px;color:#595959">27.10.2015</div>
<div class="a" style="left:55px;top:421px;width:120px;height:18px;background:linear-gradient(#f0f0f0,#d4d4d4);border:1px solid #c2c2c2;border-radius:4px"></div>
<div class="t" style="left:59px;top:425px;font-size:11px;color:#444">Anzahl von USER2</div>
<div class="a" style="left:55px;top:770px;width:50px;height:17px;background:linear-gradient(#f0f0f0,#d4d4d4);border:1px solid #c2c2c2;border-radius:4px"></div>
<div class="t" style="left:59px;top:773px;font-size:11.5px;color:#444;transform:scaleX(0.838);transform-origin:0 0">DATE</div>
<div class="tri" style="left:91px;top:776px;border-left-width:4px;border-right-width:4px;border-top:4px solid #333"></div>
<div class="a" style="left:624px;top:483px;width:139px;height:18px;background:linear-gradient(#f0f0f0,#d4d4d4);border:1px solid #c2c2c2;border-radius:4px"></div>
<div class="t" style="left:628px;top:486.5px;font-size:11.5px;color:#444;transform:scaleX(0.811);transform-origin:0 0">REQUEST</div>
<div class="tri" style="left:750px;top:490px;border-left-width:4px;border-right-width:4px;border-top:4px solid #333"></div>
<div class="a" style="left:629px;top:507.8px;width:7px;height:7px;background:#5b9bd5"></div>
<div class="t" style="left:638px;top:506.7px;font-size:11.4px;color:#595959;transform:scaleX(0.825);transform-origin:0 0">GET_EXTRACT</div>
<div class="a" style="left:629px;top:530.3px;width:7px;height:7px;background:#ed7d31"></div>
<div class="t" style="left:638px;top:529.2px;font-size:11.4px;color:#595959;transform:scaleX(0.874);transform-origin:0 0">GET_IMAGE</div>
<div class="a" style="left:629px;top:552.8px;width:7px;height:7px;background:#a5a5a5"></div>
<div class="t" style="left:638px;top:551.7px;font-size:11.4px;color:#595959;transform:scaleX(0.907);transform-origin:0 0">GET_MULTI_IMAGE</div>
<div class="a" style="left:629px;top:575.3px;width:7px;height:7px;background:#ffc000"></div>
<div class="t" style="left:638px;top:574.2px;font-size:11.4px;color:#595959;transform:scaleX(0.886);transform-origin:0 0">GET_OVERVIEW_IMAGE</div>
<div class="a" style="left:629px;top:597.8px;width:7px;height:7px;background:#4472c4"></div>
<div class="t" style="left:638px;top:596.7px;font-size:11.4px;color:#595959;transform:scaleX(0.840);transform-origin:0 0">GET_TILE</div>
<div class="a" style="left:629px;top:620.3px;width:7px;height:7px;background:#70ad47"></div>
<div class="t" style="left:638px;top:619.2px;font-size:11.4px;color:#595959;transform:scaleX(0.900);transform-origin:0 0">LOGIN</div>
<div class="a" style="left:629px;top:642.8px;width:7px;height:7px;background:#255e91"></div>
<div class="t" style="left:638px;top:641.7px;font-size:11.4px;color:#595959;transform:scaleX(0.826);transform-origin:0 0">PROJECT_START</div>
<div class="a" style="left:629px;top:665.3px;width:7px;height:7px;background:#9e480e"></div>
<div class="t" style="left:638px;top:664.2px;font-size:11.4px;color:#595959;transform:scaleX(0.825);transform-origin:0 0">PROJECT_STOP</div>
<div class="a" style="left:629px;top:687.8px;width:7px;height:7px;background:#636363"></div>
<div class="t" style="left:638px;top:686.7px;font-size:11.4px;color:#595959;transform:scaleX(0.845);transform-origin:0 0">RELOAD</div>
<div class="a" style="left:629px;top:710.3px;width:7px;height:7px;background:#997300"></div>
<div class="t" style="left:638px;top:709.2px;font-size:11.4px;color:#595959;transform:scaleX(0.869);transform-origin:0 0">SESSION_TIMEOUT</div>
</div>

<!-- MENU -->
<div id="menu">
<div class="a" style="left:81px;top:271px;width:268px;height:399px;border:1px solid #c6c6c6;background:#fff"></div>
<svg class="a" style="left:87px;top:276px" width="16" height="18" viewBox="0 0 16 18">
<text x="0" y="8" font-size="9.5" font-family="Liberation Sans" fill="#3b78c4">A</text>
<text x="0" y="16.5" font-size="9.5" font-family="Liberation Sans" fill="#8a4fb8">Z</text>
<path d="M11.5 2v13M8.5 12l3 3.5 3-3.5" fill="none" stroke="#444" stroke-width="1.1"/>
</svg>
<svg class="a" style="left:87px;top:299px" width="16" height="18" viewBox="0 0 16 18">
<text x="0" y="8" font-size="9.5" font-family="Liberation Sans" fill="#8a4fb8">Z</text>
<text x="0" y="16.5" font-size="9.5" font-family="Liberation Sans" fill="#3b78c4">A</text>
<path d="M11.5 2v13M8.5 12l3 3.5 3-3.5" fill="none" stroke="#444" stroke-width="1.1"/>
</svg>
<div class="t" style="left:113px;top:278px;font-size:11.7px;color:#444">Von A bis Z <u>s</u>ortieren</div>
<div class="t" style="left:113px;top:302px;font-size:11.7px;color:#444">Von Z bis A s<u>o</u>rtieren</div>
<div class="t" style="left:113px;top:326px;font-size:11.7px;color:#444"><u>W</u>eitere Sortieroptionen...</div>
<div class="a" style="left:113px;top:344px;width:235px;height:1px;background:#e2e4e7"></div>
<svg class="a" style="left:86px;top:350px" width="16" height="14" viewBox="0 0 16 14">
<path d="M0.5 0.5h11L7.5 5v6L5 9.5V5z" fill="#b4b4b4"/>
<path d="M8 7.5l6 6M14 7.5l-6 6" stroke="#b4b4b4" stroke-width="1.3"/>
</svg>
<div class="t" style="left:113px;top:352px;font-size:11.2px;color:#a6a6a6"><u>F</u>ilter löschen aus "REQUEST"</div>
<div class="t" style="left:113px;top:376px;font-size:11.7px;color:#444"><u>B</u>eschriftungsfilter</div>
<div class="a" style="left:335px;top:377px;width:0;height:0;border-top:4px solid transparent;border-bottom:4px solid transparent;border-left:4px solid #555"></div>
<div class="t" style="left:113px;top:400px;font-size:11.7px;color:#444"><u>W</u>ertefilter</div>
<div class="a" style="left:335px;top:401px;width:0;height:0;border-top:4px solid transparent;border-bottom:4px solid transparent;border-left:4px solid #555"></div>
<div class="a" style="left:113px;top:418px;width:235px;height:1px;background:#e2e4e7"></div>
<div class="a" style="left:112px;top:424px;width:230px;height:21px;border:1px solid #abadb3;background:#fff"></div>
<div class="t" style="left:114px;top:428px;font-size:11.8px;color:#6d6d6d">Suchen</div>
<svg class="a" style="left:326px;top:427px" width="14" height="14" viewBox="0 0 14 14"><circle cx="8.5" cy="5.5" r="4" fill="none" stroke="#3b78c4" stroke-width="1.6"/><path d="M5.5 8.5L1 13" stroke="#3b78c4" stroke-width="2"/></svg>
<div class="a" style="left:112px;top:448px;width:230px;height:169px;border:1px solid #e3e3e3;background:#fff;overflow:hidden">
<div class="a" style="left:12px;top:8px;width:1px;height:170px;border-left:1px dotted #888"></div>
<div class="a" style="left:13px;top:9px;width:9px;height:1px;border-top:1px dotted #888"></div>
<div class="a" style="left:23px;top:4px;width:10px;height:10px;border:1px solid #333;background:#fff"></div>
<svg class="a" style="left:24px;top:5px" width="8" height="8" viewBox="0 0 9 9"><path d="M1.2 4.3L3.5 7L8 1.2" fill="none" stroke="#111" stroke-width="1.8"/></svg>
<div class="t" style="left:37px;top:1.5px;font-size:12px;color:#222;transform:scaleX(0.929);transform-origin:0 0">(Alle anzeigen)</div>
<div class="a" style="left:13px;top:25px;width:9px;height:1px;border-top:1px dotted #888"></div>
<div class="a" style="left:23px;top:20px;width:10px;height:10px;border:1px solid #333;background:#fff"></div>
<svg class="a" style="left:24px;top:21px" width="8" height="8" viewBox="0 0 9 9"><path d="M1.2 4.3L3.5 7L8 1.2" fill="none" stroke="#111" stroke-width="1.8"/></svg>
<div class="t" style="left:37px;top:17.5px;font-size:12px;color:#222;transform:scaleX(0.761);transform-origin:0 0">GET_EXTRACT</div>
<div class="a" style="left:13px;top:41px;width:9px;height:1px;border-top:1px dotted #888"></div>
<div class="a" style="left:23px;top:36px;width:10px;height:10px;border:1px solid #333;background:#fff"></div>
<svg class="a" style="left:24px;top:37px" width="8" height="8" viewBox="0 0 9 9"><path d="M1.2 4.3L3.5 7L8 1.2" fill="none" stroke="#111" stroke-width="1.8"/></svg>
<div class="t" style="left:37px;top:33.5px;font-size:12px;color:#222;transform:scaleX(0.817);transform-origin:0 0">GET_IMAGE</div>
<div class="a" style="left:13px;top:57px;width:9px;height:1px;border-top:1px dotted #888"></div>
<div class="a" style="left:23px;top:52px;width:10px;height:10px;border:1px solid #333;background:#fff"></div>
<svg class="a" style="left:24px;top:53px" width="8" height="8" viewBox="0 0 9 9"><path d="M1.2 4.3L3.5 7L8 1.2" fill="none" stroke="#111" stroke-width="1.8"/></svg>
<div class="t" style="left:37px;top:49.5px;font-size:12px;color:#222;transform:scaleX(0.836);transform-origin:0 0">GET_MULTI_IMAGE</div>
<div class="a" style="left:13px;top:73px;width:9px;height:1px;border-top:1px dotted #888"></div>
<div class="a" style="left:23px;top:68px;width:10px;height:10px;border:1px solid #333;background:#fff"></div>
<svg class="a" style="left:24px;top:69px" width="8" height="8" viewBox="0 0 9 9"><path d="M1.2 4.3L3.5 7L8 1.2" fill="none" stroke="#111" stroke-width="1.8"/></svg>
<div class="t" style="left:37px;top:65.5px;font-size:12px;color:#222;transform:scaleX(0.837);transform-origin:0 0">GET_OVERVIEW_IMAGE</div>
<div class="a" style="left:13px;top:89px;width:9px;height:1px;border-top:1px dotted #888"></div>
<div class="a" style="left:23px;top:84px;width:10px;height:10px;border:1px solid #333;background:#fff"></div>
<svg class="a" style="left:24px;top:85px" width="8" height="8" viewBox="0 0 9 9"><path d="M1.2 4.3L3.5 7L8 1.2" fill="none" stroke="#111" stroke-width="1.8"/></svg>
<div class="t" style="left:37px;top:81.5px;font-size:12px;color:#222;transform:scaleX(0.748);transform-origin:0 0">GET_TILE</div>
<div class="a" style="left:13px;top:105px;width:9px;height:1px;border-top:1px dotted #888"></div>
<div class="a" style="left:23px;top:100px;width:10px;height:10px;border:1px solid #333;background:#fff"></div>
<svg class="a" style="left:24px;top:101px" width="8" height="8" viewBox="0 0 9 9"><path d="M1.2 4.3L3.5 7L8 1.2" fill="none" stroke="#111" stroke-width="1.8"/></svg>
<div class="t" style="left:37px;top:97.5px;font-size:12px;color:#222;transform:scaleX(0.870);transform-origin:0 0">LOGIN</div>
<div class="a" style="left:13px;top:121px;width:9px;height:1px;border-top:1px dotted #888"></div>
<div class="a" style="left:23px;top:116px;width:10px;height:10px;border:1px solid #333;background:#fff"></div>
<svg class="a" style="left:24px;top:117px" width="8" height="8" viewBox="0 0 9 9"><path d="M1.2 4.3L3.5 7L8 1.2" fill="none" stroke="#111" stroke-width="1.8"/></svg>
<div class="t" style="left:37px;top:113.5px;font-size:12px;color:#222;transform:scaleX(0.780);transform-origin:0 0">PROJECT_START</div>
<div class="a" style="left:13px;top:137px;width:9px;height:1px;border-top:1px dotted #888"></div>
<div class="a" style="left:23px;top:132px;width:10px;height:10px;border:1px solid #333;background:#fff"></div>
<svg class="a" style="left:24px;top:133px" width="8" height="8" viewBox="0 0 9 9"><path d="M1.2 4.3L3.5 7L8 1.2" fill="none" stroke="#111" stroke-width="1.8"/></svg>
<div class="t" style="left:37px;top:129.5px;font-size:12px;color:#222;transform:scaleX(0.790);transform-origin:0 0">PROJECT_STOP</div>
<div class="a" style="left:13px;top:153px;width:9px;height:1px;border-top:1px dotted #888"></div>
<div class="a" style="left:23px;top:148px;width:10px;height:10px;border:1px solid #333;background:#fff"></div>
<svg class="a" style="left:24px;top:149px" width="8" height="8" viewBox="0 0 9 9"><path d="M1.2 4.3L3.5 7L8 1.2" fill="none" stroke="#111" stroke-width="1.8"/></svg>
<div class="t" style="left:37px;top:145.5px;font-size:12px;color:#222;transform:scaleX(0.835);transform-origin:0 0">RELOAD</div>
<div class="a" style="left:13px;top:169px;width:9px;height:1px;border-top:1px dotted #888"></div>
<div class="a" style="left:23px;top:164px;width:10px;height:10px;border:1px solid #333;background:#fff"></div>
<svg class="a" style="left:24px;top:165px" width="8" height="8" viewBox="0 0 9 9"><path d="M1.2 4.3L3.5 7L8 1.2" fill="none" stroke="#111" stroke-width="1.8"/></svg>
<div class="t" style="left:37px;top:161.5px;font-size:12px;color:#222;transform:scaleX(0.816);transform-origin:0 0">SESSION_TIMEOUT</div>
</div>
<div class="a" style="left:324px;top:449px;width:17px;height:167px;background:#fff"></div>
<div class="a" style="left:325px;top:466px;width:14px;height:120px;background:#cdcdcd"></div>
<svg class="a" style="left:327px;top:453px" width="10" height="7" viewBox="0 0 10 7"><path d="M1 5.5L5 1.5L9 5.5" fill="none" stroke="#555" stroke-width="1.4"/></svg>

<svg class="a" style="left:327px;top:602px" width="10" height="7" viewBox="0 0 10 7"><path d="M1 1.5L5 5.5L9 1.5" fill="none" stroke="#555" stroke-width="1.4"/></svg>
<div class="a" style="left:183px;top:632px;width:73px;height:21px;border:1px solid #3c7fb1;background:linear-gradient(#f2f2f2,#e5e5e5)"></div>
<div class="t" style="left:183px;width:73px;text-align:center;top:638px;font-size:11.8px;color:#222">OK</div>
<div class="a" style="left:267px;top:632px;width:74px;height:21px;border:1px solid #adadad;background:linear-gradient(#f2f2f2,#e5e5e5)"></div>
<div class="t" style="left:267px;width:74px;text-align:center;top:638px;font-size:11.5px;color:#222">Abbrechen</div>
<div class="a" style="left:82px;top:658px;width:266px;height:1px;background:#dde4ec"></div>
<div class="a" style="left:82px;top:659px;width:266px;height:10px;background:linear-gradient(#fff 0%,#fafafa 35%,#e6e6e6 100%)"></div>
<svg class="a" style="left:338px;top:660px" width="8" height="8" viewBox="0 0 8 8"><rect x="5" y="1" width="2" height="2" fill="#888"/><rect x="2" y="4" width="2" height="2" fill="#888"/><rect x="5" y="4" width="2" height="2" fill="#888"/></svg>
</div>

<!-- SHEET TABS / SCROLL -->
<div id="sheettabs">
<div class="a" style="left:1px;top:844px;width:891px;height:28px;background:#f3f3f3"></div>
<div class="a" style="left:1px;top:844px;width:100px;height:1px;background:#c6c6c6"></div>
<div class="a" style="left:177px;top:844px;width:695px;height:1px;background:#c6c6c6"></div>
<div class="a" style="left:101px;top:844px;width:77px;height:25px;background:#fff;border-left:1px solid #c6c6c6;border-right:1px solid #c6c6c6"></div>
<div class="a" style="left:101px;top:866px;width:77px;height:2px;background:#217346"></div>
<div class="t" style="left:101px;width:77px;text-align:center;top:851px;font-size:13px;font-weight:bold;color:#217346">Tabelle2</div>
<div class="t" style="left:190px;top:851px;font-size:13px;color:#444">Tabelle1</div>
<div class="a" style="left:252px;top:848px;width:1px;height:19px;background:#c6c6c6"></div>
<svg class="a" style="left:285px;top:849px" width="17" height="17" viewBox="0 0 17 17"><circle cx="8.5" cy="8.5" r="7.3" fill="none" stroke="#555" stroke-width="1.4"/><path d="M8.5 4.5v8M4.5 8.5h8" stroke="#555" stroke-width="1.6"/></svg>
<div class="a" style="left:28px;top:853px;width:0;height:0;border-top:4px solid transparent;border-bottom:4px solid transparent;border-right:4px solid #c6c6c6"></div>
<div class="a" style="left:57px;top:853px;width:0;height:0;border-top:4px solid transparent;border-bottom:4px solid transparent;border-left:4px solid #c6c6c6"></div>
<svg class="a" style="left:535px;top:852px" width="3" height="13" viewBox="0 0 3 13"><path d="M1.5 1v1.5M1.5 5.5v1.5M1.5 10v1.5" stroke="#999" stroke-width="1.5"/></svg>
<div class="a" style="left:552px;top:851px;width:318px;height:15px;background:#e9e9e9"></div>
<div class="a" style="left:552px;top:851px;width:15px;height:15px;border:1px solid #ababab;background:#fff"></div>
<div class="a" style="left:557px;top:855px;width:0;height:0;border-top:4px solid transparent;border-bottom:4px solid transparent;border-right:4px solid #444"></div>
<div class="a" style="left:567px;top:851px;width:76px;height:15px;border:1px solid #ababab;background:#fff"></div>
<div class="a" style="left:855px;top:851px;width:15px;height:15px;border:1px solid #ababab;background:#fff"></div>
<div class="a" style="left:861px;top:855px;width:0;height:0;border-top:4px solid transparent;border-bottom:4px solid transparent;border-left:4px solid #444"></div>
<div class="a" style="left:871px;top:193px;width:21px;height:651px;background:#fff"></div><div class="a" style="left:871px;top:844px;width:21px;height:28px;background:#f3f3f3"></div>
<div class="a" style="left:874px;top:195px;width:15px;height:649px;background:#f0f0f0"></div>
<div class="a" style="left:874px;top:195px;width:15px;height:15px;border:1px solid #ababab;background:#fff"></div>
<div class="a" style="left:877px;top:200px;width:0;height:0;border-left:4px solid transparent;border-right:4px solid transparent;border-bottom:4px solid #444"></div>
<div class="a" style="left:874px;top:209px;width:15px;height:601px;border:1px solid #ababab;background:#fff"></div>
<div class="a" style="left:874px;top:830px;width:15px;height:14px;border:1px solid #ababab;background:#fff"></div>
<div class="a" style="left:877px;top:835px;width:0;height:0;border-left:4px solid transparent;border-right:4px solid transparent;border-top:4px solid #444"></div>
</div>

<!-- PANE -->
<div id="pane">
<div class="a" style="left:892px;top:193px;width:1px;height:677px;background:#d4d4d4"></div>
<div class="a" style="left:893px;top:193px;width:259px;height:679px;background:#fff"></div>
<div class="t" style="left:905px;top:210px;font-size:20.4px;color:#217346">PivotChart-Felder</div>
<div class="a" style="left:1112px;top:214px;width:0;height:0;border-left:4px solid transparent;border-right:4px solid transparent;border-top:4px solid #666"></div>
<svg class="a" style="left:1128px;top:210px" width="11" height="11" viewBox="0 0 11 11"><path d="M1 1L10 10M10 1L1 10" stroke="#555" stroke-width="1.8"/></svg>
<div class="t" style="left:906px;top:240px;font-size:11.6px;color:#444;line-height:15px">Wählen Sie die Felder aus, die Sie<br>dem Bericht hinzufügen<br>möchten:</div>
<div class="a" style="left:1094px;top:249px;width:44px;height:27px;border:1px solid #c6c6c6;background:#fff"></div>
<svg class="a" style="left:1103px;top:255px" width="14" height="14" viewBox="0 0 14 14"><g fill="#999"><circle cx="7" cy="7" r="4.5"/><rect x="5.8" y="0.5" width="2.4" height="13"/><rect x="0.5" y="5.8" width="13" height="2.4"/><rect x="5.8" y="0.5" width="2.4" height="13" transform="rotate(45 7 7)"/><rect x="5.8" y="0.5" width="2.4" height="13" transform="rotate(-45 7 7)"/></g><circle cx="7" cy="7" r="2" fill="#fff"/></svg>
<div class="a" style="left:1125px;top:260px;width:0;height:0;border-left:4px solid transparent;border-right:4px solid transparent;border-top:4px solid #777"></div>
<div class="a" style="left:905px;top:298px;width:233px;height:234px;background:#fafafa;overflow:hidden">
<div class="a" style="left:1px;top:1.1px;width:13px;height:13px;border:1px solid #ababab;background:#fff"></div>
<svg class="a" style="left:3px;top:3.1px" width="9" height="9" viewBox="0 0 9 9"><path d="M1 4.5L3.5 7.5L8 1" fill="none" stroke="#777" stroke-width="1.2"/></svg>
<div class="t" style="left:20px;top:2.1px;font-size:12px;font-weight:bold;color:#333;transform:scaleX(0.913);transform-origin:0 0">DATE</div>
<div class="a" style="left:1px;top:20.1px;width:13px;height:13px;border:1px solid #ababab;background:#fff"></div>
<div class="t" style="left:20px;top:21.1px;font-size:12px;color:#444;transform:scaleX(0.911);transform-origin:0 0">TIME</div>
<div class="a" style="left:1px;top:39.1px;width:13px;height:13px;border:1px solid #ababab;background:#fff"></div>
<div class="t" style="left:20px;top:40.1px;font-size:12px;color:#444;transform:scaleX(0.906);transform-origin:0 0">HOUR</div>
<div class="a" style="left:1px;top:58.1px;width:13px;height:13px;border:1px solid #ababab;background:#fff"></div>
<svg class="a" style="left:3px;top:60.1px" width="9" height="9" viewBox="0 0 9 9"><path d="M1 4.5L3.5 7.5L8 1" fill="none" stroke="#777" stroke-width="1.2"/></svg>
<div class="t" style="left:20px;top:59.1px;font-size:12px;font-weight:bold;color:#333;transform:scaleX(0.888);transform-origin:0 0">USER</div>
<div class="a" style="left:1px;top:77.1px;width:13px;height:13px;border:1px solid #ababab;background:#fff"></div>
<div class="t" style="left:20px;top:78.1px;font-size:12px;color:#444;transform:scaleX(0.830);transform-origin:0 0">PROJECT</div>
<div class="a" style="left:1px;top:96.1px;width:13px;height:13px;border:1px solid #ababab;background:#fff"></div>
<svg class="a" style="left:3px;top:98.1px" width="9" height="9" viewBox="0 0 9 9"><path d="M1 4.5L3.5 7.5L8 1" fill="none" stroke="#777" stroke-width="1.2"/></svg>
<div class="t" style="left:20px;top:97.1px;font-size:12px;font-weight:bold;color:#333;transform:scaleX(0.886);transform-origin:0 0">REQUEST</div>
<div class="a" style="left:1px;top:115.1px;width:13px;height:13px;border:1px solid #ababab;background:#fff"></div>
<div class="t" style="left:20px;top:116.1px;font-size:12px;color:#444;transform:scaleX(0.823);transform-origin:0 0">RESOURCE</div>
<div class="a" style="left:1px;top:134.1px;width:13px;height:13px;border:1px solid #ababab;background:#fff"></div>
<div class="t" style="left:20px;top:135.1px;font-size:12px;color:#444;transform:scaleX(0.941);transform-origin:0 0">DURATION</div>
<div class="a" style="left:1px;top:153.1px;width:13px;height:13px;border:1px solid #ababab;background:#fff"></div>
<div class="t" style="left:20px;top:154.1px;font-size:12px;color:#444;transform:scaleX(0.767);transform-origin:0 0">IP</div>
<div class="a" style="left:1px;top:172.1px;width:13px;height:13px;border:1px solid #ababab;background:#fff"></div>
<div class="t" style="left:20px;top:173.1px;font-size:12px;color:#444;transform:scaleX(0.907);transform-origin:0 0">STATUS</div>
<div class="a" style="left:1px;top:191.1px;width:13px;height:13px;border:1px solid #ababab;background:#fff"></div>
<div class="t" style="left:20px;top:192.1px;font-size:12px;color:#444;transform:scaleX(0.846);transform-origin:0 0">SESSION ID</div>
<div class="a" style="left:1px;top:210.1px;width:13px;height:13px;border:1px solid #ababab;background:#fff"></div>
<div class="t" style="left:20px;top:211.1px;font-size:12px;color:#444;transform:scaleX(0.826);transform-origin:0 0">SYNERGIS_SESSION</div>
<div class="a" style="left:1px;top:229.1px;width:13px;height:13px;border:1px solid #ababab;background:#fff"></div>
<div class="t" style="left:20px;top:230.1px;font-size:12px;color:#444;transform:scaleX(0.801);transform-origin:0 0">USER_INFO</div>
</div>
<div class="a" style="left:1122px;top:300px;width:15px;height:232px;background:#f0f0f0"></div>
<div class="a" style="left:1122px;top:300px;width:15px;height:15px;border:1px solid #ababab;background:#fff"></div>
<div class="a" style="left:1126px;top:305px;width:0;height:0;border-left:4px solid transparent;border-right:4px solid transparent;border-bottom:4px solid #555"></div>
<div class="a" style="left:1122px;top:315px;width:15px;height:127px;border:1px solid #ababab;background:#fff"></div>
<div class="a" style="left:1122px;top:517px;width:15px;height:15px;border:1px solid #ababab;background:#fff"></div>
<div class="a" style="left:1126px;top:522px;width:0;height:0;border-left:4px solid transparent;border-right:4px solid transparent;border-top:4px solid #555"></div>
<div class="a" style="left:906px;top:549px;width:234px;height:1px;border-top:1px dotted #b4b4b4"></div>
<div class="t" style="left:907px;top:553.5px;font-size:11.6px;color:#444;line-height:15px">Felder zwischen den Bereichen unten<br>ziehen:</div>
<div class="a" style="left:907px;top:620px;width:109px;height:84px;background:#fafafa"></div>
<div class="a" style="left:1024px;top:620px;width:115px;height:84px;background:#fafafa"></div>
<div class="a" style="left:907px;top:735px;width:109px;height:85px;background:#fafafa"></div>
<div class="a" style="left:1024px;top:735px;width:115px;height:85px;background:#fafafa"></div>
<div class="a" style="left:1022px;top:601px;width:1px;height:219px;background:#ababab"></div>
<div class="a" style="left:907px;top:710px;width:232px;height:1px;background:#ababab"></div>
<svg class="a" style="left:911px;top:604px" width="11" height="11" viewBox="0 0 11 11"><path d="M0 0h11L6.5 5V11L4.5 9.5V5z" fill="#999"/></svg>
<div class="t" style="left:930px;top:604px;font-size:12px;color:#444;transform:scaleX(0.875);transform-origin:0 0">FILTER</div>
<svg class="a" style="left:1030px;top:603px" width="10" height="11" viewBox="0 0 10 11"><path d="M0.5 0v11M3 0v11M5.5 0v11M8 0v11" stroke="#999" stroke-width="1"/><rect x="0" y="0" width="2" height="11" fill="#999"/></svg>
<div class="t" style="left:1048px;top:604px;font-size:12px;color:#444;transform:scaleX(0.869);transform-origin:0 0">LEGENDE (REIH...</div>
<svg class="a" style="left:911px;top:720px" width="10" height="10" viewBox="0 0 10 10"><path d="M0 1h10M0 3.5h10M0 6h10M0 8.5h10" stroke="#999"/></svg>
<div class="t" style="left:930px;top:720px;font-size:12px;color:#444;transform:scaleX(0.909);transform-origin:0 0">ACHSE (KATE...</div>
<div class="t" style="left:1029px;top:717px;font-size:13px;color:#888">Σ</div>
<div class="t" style="left:1048px;top:720px;font-size:12px;color:#444;transform:scaleX(0.858);transform-origin:0 0">WERTE</div>
<div class="a" style="left:1026px;top:623px;width:112px;height:19px;border:1px solid #ababab;background:#fff"></div>
<div class="t" style="left:1033px;top:627px;font-size:12px;color:#444;transform:scaleX(0.833);transform-origin:0 0">REQUEST</div>
<div class="a" style="left:1120px;top:630px;width:0;height:0;border-left:4px solid transparent;border-right:4px solid transparent;border-top:4px solid #222"></div>
<div class="a" style="left:908px;top:739px;width:107px;height:19px;border:1px solid #ababab;background:#fff"></div>
<div class="t" style="left:915px;top:743px;font-size:12px;color:#444;transform:scaleX(0.922);transform-origin:0 0">DATE</div>
<div class="a" style="left:997px;top:746px;width:0;height:0;border-left:4px solid transparent;border-right:4px solid transparent;border-top:4px solid #222"></div>
<div class="a" style="left:1026px;top:739px;width:112px;height:19px;border:1px solid #ababab;background:#fff"></div>
<div class="t" style="left:1033px;top:743px;font-size:12px;color:#444;transform:scaleX(0.956);transform-origin:0 0">Anzahl von U...</div>
<div class="a" style="left:1120px;top:746px;width:0;height:0;border-left:4px solid transparent;border-right:4px solid transparent;border-top:4px solid #222"></div>
<div class="a" style="left:907px;top:845px;width:13px;height:13px;border:1px solid #ababab;background:#fff"></div>
<div class="t" style="left:926px;top:845px;font-size:12px;color:#444;transform:scaleX(0.980);transform-origin:0 0">Layoutaktualisieru...</div>
<div class="a" style="left:1045px;top:839px;width:94px;height:23px;border:1px solid #d4d4d4;background:#fafafa"></div>
<div class="t" style="left:1050px;top:845px;font-size:12px;color:#a6a6a6;transform:scaleX(0.882);transform-origin:0 0">AKTUALISIEREN</div>
</div>

<!-- STATUS -->
<div id="status">
<div class="a" style="left:0;top:872px;width:1153px;height:23px;background:#217346"></div>
<div class="t" style="left:8.5px;top:878px;font-size:11.5px;color:#fff;transform:scaleX(0.794);transform-origin:0 0">BEREIT</div>
<div class="a" style="left:849px;top:872px;width:38px;height:23px;background:#0a5c2e"></div>
<svg class="a" style="left:861px;top:876px" width="14" height="14" viewBox="0 0 14 14"><path d="M0.5 0.5h13v13h-13zM0.5 4.5h13M0.5 9h13M4.8 0.5v13M9.2 0.5v13" fill="none" stroke="#fff"/></svg>
<svg class="a" style="left:899px;top:876px" width="14" height="14" viewBox="0 0 14 14"><path d="M0.5 0.5h13v13h-13z" fill="none" stroke="#fff"/><path d="M3 3.5h8M3 6h8M3 8.5h8M3 11h8" stroke="#fff"/></svg>
<svg class="a" style="left:937px;top:876px" width="14" height="14" viewBox="0 0 14 14"><path d="M0.5 0.5h13v13h-13z" fill="none" stroke="#fff"/><rect x="3" y="0" width="3" height="7" fill="#fff"/><rect x="8" y="0" width="3" height="7" fill="#fff"/></svg>
<div class="a" style="left:969px;top:882px;width:6px;height:2px;background:#fff"></div>
<div class="a" style="left:978px;top:882px;width:100px;height:1px;background:#fff"></div>
<div class="a" style="left:1026px;top:876px;width:4px;height:13px;background:#fff"></div>
<div class="a" style="left:1082px;top:882px;width:10px;height:2px;background:#fff"></div>
<div class="a" style="left:1086px;top:878px;width:2px;height:10px;background:#fff"></div>
<div class="t" style="left:1105.3px;top:878px;font-size:11.5px;color:#fff;transform:scaleX(0.918);transform-origin:0 0">100%</div>
</div>
</body></html>
